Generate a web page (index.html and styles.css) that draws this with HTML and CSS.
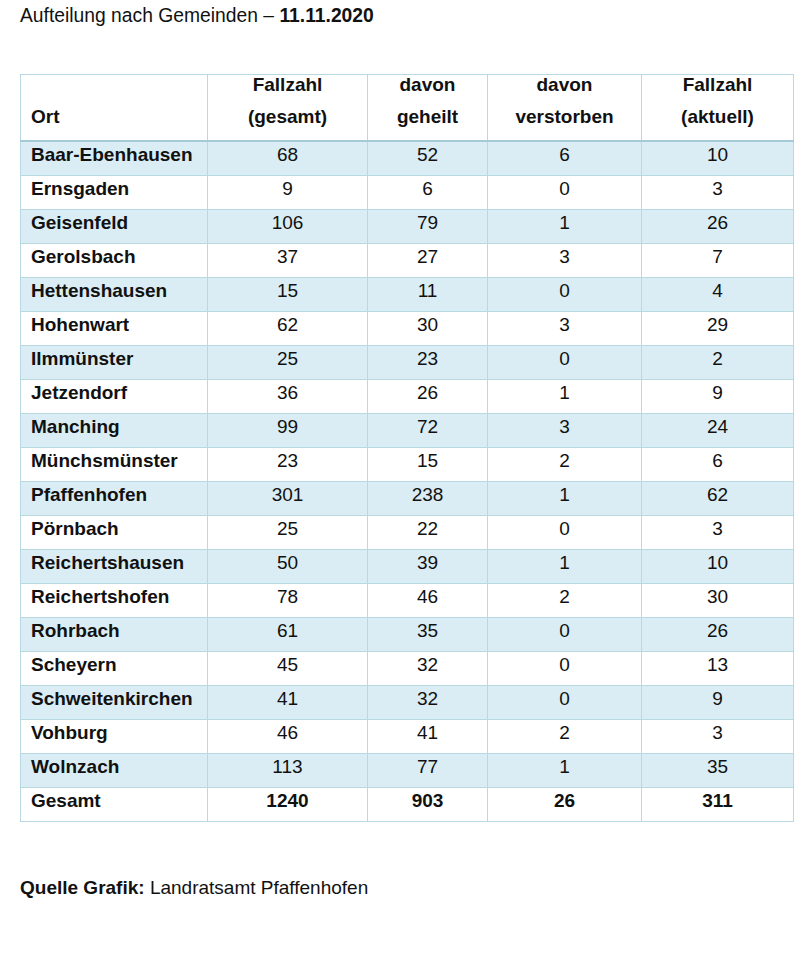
FILE: index.html
```html
<!DOCTYPE html>
<html lang="de">
<head>
<meta charset="utf-8">
<title>Aufteilung nach Gemeinden</title>
<link rel="stylesheet" href="styles.css">
</head>
<body>
<p class="title">Aufteilung nach Gemeinden – <b>11.11.2020</b></p>
<table class="cases">
  <colgroup>
    <col class="c1"><col class="c2"><col class="c3"><col class="c4"><col class="c5">
  </colgroup>
  <thead>
    <tr>
      <th class="name"><span class="hl">&nbsp;</span><span class="hl">Ort</span></th>
      <th><span class="hl">Fallzahl</span><span class="hl">(gesamt)</span></th>
      <th><span class="hl">davon</span><span class="hl">geheilt</span></th>
      <th><span class="hl">davon</span><span class="hl">verstorben</span></th>
      <th><span class="hl">Fallzahl</span><span class="hl">(aktuell)</span></th>
    </tr>
  </thead>
  <tbody>
    <tr class="alt"><td class="name">Baar-Ebenhausen</td><td>68</td><td>52</td><td>6</td><td>10</td></tr>
    <tr><td class="name">Ernsgaden</td><td>9</td><td>6</td><td>0</td><td>3</td></tr>
    <tr class="alt"><td class="name">Geisenfeld</td><td>106</td><td>79</td><td>1</td><td>26</td></tr>
    <tr><td class="name">Gerolsbach</td><td>37</td><td>27</td><td>3</td><td>7</td></tr>
    <tr class="alt"><td class="name">Hettenshausen</td><td>15</td><td>11</td><td>0</td><td>4</td></tr>
    <tr><td class="name">Hohenwart</td><td>62</td><td>30</td><td>3</td><td>29</td></tr>
    <tr class="alt"><td class="name">Ilmmünster</td><td>25</td><td>23</td><td>0</td><td>2</td></tr>
    <tr><td class="name">Jetzendorf</td><td>36</td><td>26</td><td>1</td><td>9</td></tr>
    <tr class="alt"><td class="name">Manching</td><td>99</td><td>72</td><td>3</td><td>24</td></tr>
    <tr><td class="name">Münchsmünster</td><td>23</td><td>15</td><td>2</td><td>6</td></tr>
    <tr class="alt"><td class="name">Pfaffenhofen</td><td>301</td><td>238</td><td>1</td><td>62</td></tr>
    <tr><td class="name">Pörnbach</td><td>25</td><td>22</td><td>0</td><td>3</td></tr>
    <tr class="alt"><td class="name">Reichertshausen</td><td>50</td><td>39</td><td>1</td><td>10</td></tr>
    <tr><td class="name">Reichertshofen</td><td>78</td><td>46</td><td>2</td><td>30</td></tr>
    <tr class="alt"><td class="name">Rohrbach</td><td>61</td><td>35</td><td>0</td><td>26</td></tr>
    <tr><td class="name">Scheyern</td><td>45</td><td>32</td><td>0</td><td>13</td></tr>
    <tr class="alt"><td class="name">Schweitenkirchen</td><td>41</td><td>32</td><td>0</td><td>9</td></tr>
    <tr><td class="name">Vohburg</td><td>46</td><td>41</td><td>2</td><td>3</td></tr>
    <tr class="alt"><td class="name">Wolnzach</td><td>113</td><td>77</td><td>1</td><td>35</td></tr>
    <tr class="total"><td class="name">Gesamt</td><td>1240</td><td>903</td><td>26</td><td>311</td></tr>
  </tbody>
</table>
<p class="source"><b>Quelle Grafik:</b> Landratsamt Pfaffenhofen</p>
</body>
</html>
```
FILE: styles.css
```css
html, body {
  margin: 0;
  padding: 0;
  background: #ffffff;
}
body {
  font-family: "Liberation Sans", Arial, sans-serif;
  color: #111111;
  padding: 0 0 0 20px;
}
.title {
  margin: 0;
  padding-top: 5px;
  font-size: 19.3px;
  line-height: 22px;
}
.cases {
  margin-top: 47px;
  border-collapse: collapse;
  table-layout: fixed;
  width: 773px;
  font-size: 19px;
}
.c1 { width: 187px; }
.c2 { width: 160px; }
.c3 { width: 120px; }
.c4 { width: 154px; }
.c5 { width: 152px; }
.cases th, .cases td {
  border: 1px solid #b9d9e2;
  text-align: center;
  padding: 0;
}
.cases th {
  font-weight: bold;
  vertical-align: top;
  padding: 0 10px 13px;
  border-bottom: 2px solid #a3cbd7;
}
.hl {
  display: block;
  line-height: 20px;
}
.hl + .hl {
  margin-top: 12px;
}
.cases td {
  height: 34px;
  box-sizing: border-box;
  line-height: 22px;
  vertical-align: top;
  padding-top: 2px;
}
.cases .name {
  text-align: left;
  padding-left: 10px;
  font-weight: bold;
}
.alt td {
  background: #daedf4;
}
.total td {
  font-weight: bold;
}
.source {
  margin: 55px 0 0;
  font-size: 19px;
  line-height: 22px;
}
```
